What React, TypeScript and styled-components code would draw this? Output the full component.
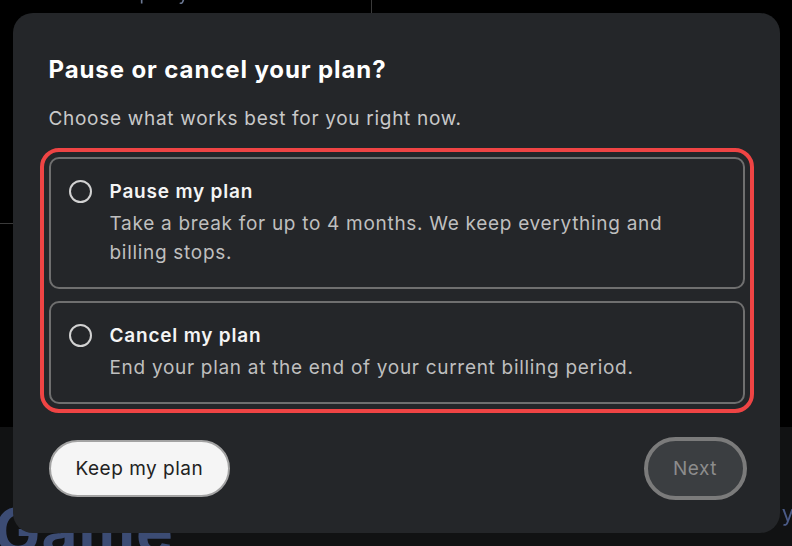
import React, { useState } from 'react'
import styled, { createGlobalStyle } from 'styled-components'

const GlobalStyle = createGlobalStyle`
  * {
    box-sizing: border-box;
  }
  html, body {
    margin: 0;
    height: 100%;
    background: #000;
    font-family: Inter, 'Liberation Sans', sans-serif;
    overflow: hidden;
  }
`

// page that sits behind the dialog
const Backdrop = styled.div`
  position: fixed;
  inset: 0;
  background: #000;
`

const BackdropBand = styled.div`
  position: absolute;
  left: 0;
  right: 0;
  top: 427px;
  bottom: 0;
  background: #111213;
`

const BackdropRule = styled.div<{ $vertical?: boolean }>`
  position: absolute;
  background: #3a3a3a;
  ${p =>
    p.$vertical
      ? 'left: 371px; top: 0; width: 1px; height: 14px;'
      : 'left: 0; top: 223px; width: 14px; height: 1px;'}
`

const BackdropHeading = styled.div`
  position: absolute;
  left: -6px;
  top: 500px;
  font-size: 62px;
  line-height: 1;
  font-weight: 700;
  color: #3c4c74;
  letter-spacing: 1px;
`

const BackdropCrumb = styled.div`
  position: absolute;
  left: 128px;
  top: -17px;
  font-size: 18px;
  line-height: 22px;
  color: #6d7a96;
`

const BackdropTail = styled.div`
  position: absolute;
  right: -2px;
  top: 500px;
  font-size: 22px;
  color: #4a5a86;
`

const Overlay = styled.div`
  position: fixed;
  inset: 0;
  display: flex;
  align-items: flex-start;
  justify-content: center;
  padding-top: 13px;
`

const Dialog = styled.div`
  width: 767px;
  background: #242629;
  border-radius: 20px;
  padding: 42px 35px 33px 36px;
  display: flex;
  flex-direction: column;
`

const Title = styled.h2`
  margin: 0;
  font-size: 24px;
  line-height: 30px;
  font-weight: 700;
  color: #fff;
  letter-spacing: 0.9px;
`

const Subtitle = styled.p`
  margin: 21px 0 0;
  font-size: 19px;
  line-height: 26px;
  color: #c9c9c9;
  letter-spacing: 0.7px;
`

const Options = styled.div`
  margin-top: 25px;
  display: flex;
  flex-direction: column;
  gap: 12px;
  border-radius: 10px;
  outline: 4px solid #ef4444;
  outline-offset: 5px;
`

const Option = styled.label`
  display: flex;
  align-items: flex-start;
  gap: 18px;
  padding: 20px 18px;
  border: 2px solid #6f6f6f;
  border-radius: 10px;
  cursor: pointer;
`

const Radio = styled.span<{ $checked: boolean }>`
  flex: none;
  width: 23px;
  height: 23px;
  margin-top: 1px;
  border-radius: 50%;
  border: 2px solid #d2d2d2;
  display: flex;
  align-items: center;
  justify-content: center;

  &::after {
    content: '';
    width: 11px;
    height: 11px;
    border-radius: 50%;
    background: ${p => (p.$checked ? '#fff' : 'transparent')};
  }
`

const OptionText = styled.div`
  display: flex;
  flex-direction: column;
  gap: 5px;
`

const OptionTitle = styled.span`
  font-size: 19px;
  line-height: 25px;
  font-weight: 600;
  color: #f4f4f4;
  letter-spacing: 0.8px;
`

const OptionDescription = styled.span`
  font-size: 19px;
  line-height: 29px;
  color: #bfbfbf;
  letter-spacing: 0.7px;
`

const Actions = styled.div`
  margin-top: 33px;
  display: flex;
  align-items: center;
  justify-content: space-between;
`

const Button = styled.button<{ $variant: 'light' | 'muted' }>`
  font-family: inherit;
  font-size: 19px;
  letter-spacing: 0.5px;
  border-radius: 999px;
  cursor: pointer;
  ${p =>
    p.$variant === 'light'
      ? `
    height: 57px;
    padding: 0 25px;
    background: #f5f5f5;
    color: #222;
    border: 2px solid #a3a3a3;
  `
      : `
    height: 63px;
    width: 103px;
    margin-right: -2px;
    background: #3b3e41;
    color: #8c8c8c;
    border: 4px solid #7b7b7b;
  `}
`

const options = [
  {
    id: 'pause',
    title: 'Pause my plan',
    description: 'Take a break for up to 4 months. We keep everything and billing stops.',
  },
  {
    id: 'cancel',
    title: 'Cancel my plan',
    description: 'End your plan at the end of your current billing period.',
  },
]

const App: React.FC = () => {
  const [choice, setChoice] = useState<string | null>(null)

  return (
    <>
      <GlobalStyle />
      <Backdrop>
        <BackdropCrumb>Spotify</BackdropCrumb>
        <BackdropRule $vertical />
        <BackdropRule />
        <BackdropBand />
        <BackdropHeading>Game</BackdropHeading>
        <BackdropTail>y</BackdropTail>
      </Backdrop>
      <Overlay>
        <Dialog role="dialog" aria-labelledby="plan-title">
          <Title id="plan-title">Pause or cancel your plan?</Title>
          <Subtitle>Choose what works best for you right now.</Subtitle>
          <Options role="radiogroup">
            {options.map(option => (
              <Option key={option.id} onClick={() => setChoice(option.id)}>
                <Radio $checked={choice === option.id} />
                <OptionText>
                  <OptionTitle>{option.title}</OptionTitle>
                  <OptionDescription>{option.description}</OptionDescription>
                </OptionText>
              </Option>
            ))}
          </Options>
          <Actions>
            <Button $variant="light">Keep my plan</Button>
            <Button $variant="muted" disabled={!choice}>
              Next
            </Button>
          </Actions>
        </Dialog>
      </Overlay>
    </>
  )
}

export default App
